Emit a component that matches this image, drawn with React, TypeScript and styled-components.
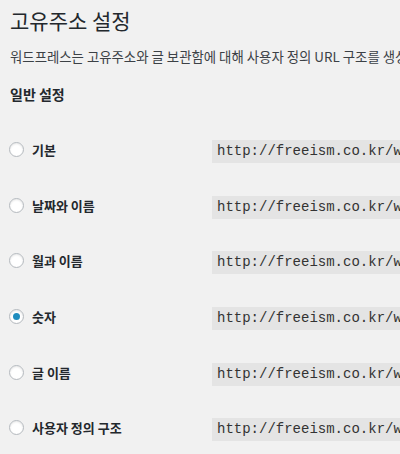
import React from "react";
import styled, { createGlobalStyle } from "styled-components";

const Global = createGlobalStyle`
  html, body { margin: 0; padding: 0; background: #f1f1f1; overflow: hidden; }
  body {
    font-family: "Noto Sans CJK KR", "Noto Sans", sans-serif;
    color: #23282d;
    width: 400px;
    height: 454px;
  }
`;

const Page = styled.div`
  width: 400px;
  overflow: hidden;
  box-sizing: border-box;
  padding: 0 0 0 10px;
  display: flex;
  flex-direction: column;
`;

const Title = styled.h1`
  margin: 7px 0 0;
  font-size: 21px;
  font-weight: 400;
  line-height: 26px;
  white-space: nowrap;
`;

const Desc = styled.p`
  margin: 14px 0 0;
  font-size: 13.4px;
  line-height: 18px;
  white-space: nowrap;
  color: #3c4146;
`;

const Heading = styled.h2`
  margin: 19px 0 0;
  font-size: 14px;
  font-weight: 700;
  line-height: 20px;
  white-space: nowrap;
`;

const List = styled.div`
  margin-top: 18px;
  display: flex;
  flex-direction: column;
`;

const Row = styled.div`
  height: 55.6px;
  display: grid;
  grid-template-columns: 202px 1fr;
  align-items: center;
`;

const Label = styled.label`
  display: flex;
  align-items: center;
  gap: 8px;
  font-size: 13px;
  font-weight: 700;
  white-space: nowrap;
`;

const Radio = styled.span<{ $checked?: boolean }>`
  width: 15px;
  height: 15px;
  box-sizing: border-box;
  border-radius: 50%;
  border: 1px solid #b4b9be;
  background: #fff;
  box-shadow: inset 0 1px 2px rgba(0, 0, 0, 0.1);
  display: flex;
  align-items: center;
  justify-content: center;
  margin-left: -1px;
  &::after {
    content: "";
    display: ${(p) => (p.$checked ? "block" : "none")};
    width: 7px;
    height: 7px;
    border-radius: 50%;
    background: #1e8cbe;
  }
`;

const CodeCell = styled.div`
  overflow: hidden;
  min-width: 0;
`;

const Code = styled.code`
  display: inline-block;
  background: #e4e4e4;
  font-family: "Liberation Mono", "DejaVu Sans Mono", monospace;
  font-size: 14px;
  line-height: 23px;
  padding: 0 5px;
  white-space: nowrap;
  color: #333;
`;

const rows = [
  { label: "기본", url: "http://freeism.co.kr/wp/?p=123" },
  { label: "날짜와 이름", url: "http://freeism.co.kr/wp/2016/01/01/sample-post/" },
  { label: "월과 이름", url: "http://freeism.co.kr/wp/2016/01/sample-post/" },
  { label: "숫자", url: "http://freeism.co.kr/wp/archives/123", checked: true },
  { label: "글 이름", url: "http://freeism.co.kr/wp/sample-post/" },
  { label: "사용자 정의 구조", url: "http://freeism.co.kr/wp" },
];

export default function App() {
  return (
    <>
      <Global />
      <Page>
        <Title>고유주소 설정</Title>
        <Desc>
          워드프레스는 고유주소와 글 보관함에 대해 사용자 정의 URL 구조를 생성할 수 있는 기능을 제공합니다.
        </Desc>
        <Heading>일반 설정</Heading>
        <List>
          {rows.map((r) => (
            <Row key={r.label}>
              <Label>
                <Radio $checked={r.checked} />
                {r.label}
              </Label>
              <CodeCell>
                <Code>{r.url}</Code>
              </CodeCell>
            </Row>
          ))}
        </List>
      </Page>
    </>
  );
}
